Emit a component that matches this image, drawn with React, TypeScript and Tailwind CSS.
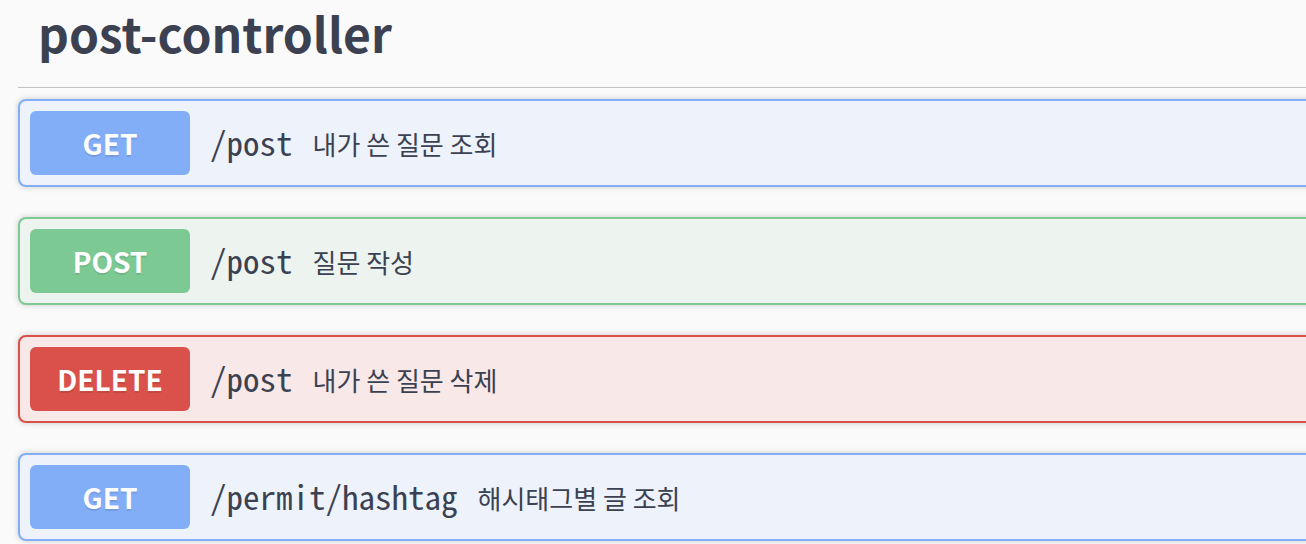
const ops = [
  {
    method: 'GET',
    path: '/post',
    desc: '내가 쓴 질문 조회',
    badge: 'bg-[#82adf7]',
    box: 'border-[#82adf7] bg-[#edf2fb]',
  },
  {
    method: 'POST',
    path: '/post',
    desc: '질문 작성',
    badge: 'bg-[#7dc994]',
    box: 'border-[#7dc994] bg-[#edf4ef]',
  },
  {
    method: 'DELETE',
    path: '/post',
    desc: '내가 쓴 질문 삭제',
    badge: 'bg-[#d9514a]',
    box: 'border-[#d9514a] bg-[#f8e8e7]',
  },
  {
    method: 'GET',
    path: '/permit/hashtag',
    desc: '해시태그별 글 조회',
    badge: 'bg-[#82adf7]',
    box: 'border-[#82adf7] bg-[#edf2fb]',
  },
];

function OpBlock({ op }: { op: (typeof ops)[number] }) {
  return (
    <div
      className={`flex h-[88px] items-center rounded-[8px] border-2 p-[10px] shadow-[0_0_6px_rgba(0,0,0,0.19)] ${op.box}`}
    >
      <div
        className={`flex h-[64px] w-[160px] shrink-0 items-center justify-center rounded-[6px] text-[28px] font-bold text-white [text-shadow:0_2px_0_rgba(0,0,0,0.1)] ${op.badge}`}
        style={{ fontFamily: '"Noto Sans CJK KR", "Noto Sans", sans-serif' }}
      >
        {op.method}
      </div>
      <span
        className="px-[20px] text-[33px] text-[#3b4151]"
        style={{ fontFamily: '"Noto Sans Mono CJK KR", "DejaVu Sans Mono", monospace' }}
      >
        {op.path}
      </span>
      <span
        className="text-[26px] text-[#3b4151]"
        style={{ fontFamily: '"Noto Sans CJK KR", "Noto Sans", sans-serif' }}
      >
        {op.desc}
      </span>
    </div>
  );
}

export default function App() {
  return (
    <div className="h-[544px] w-[1306px] overflow-hidden bg-[#fafafa]">
      <div className="w-[1320px] pl-[18px]">
        <div className="h-[88px] border-b border-[#c0c1c5] pl-[20px] pt-[3px]">
          <h4
            className="text-[48px] font-bold leading-[58px] text-[#3b4151]"
            style={{ fontFamily: '"Noto Sans CJK KR", "Noto Sans", sans-serif' }}
          >
            post-controller
          </h4>
        </div>
        <div className="mt-[11px] flex flex-col gap-[30px]">
          {ops.map((op, i) => (
            <OpBlock key={i} op={op} />
          ))}
        </div>
      </div>
    </div>
  );
}
